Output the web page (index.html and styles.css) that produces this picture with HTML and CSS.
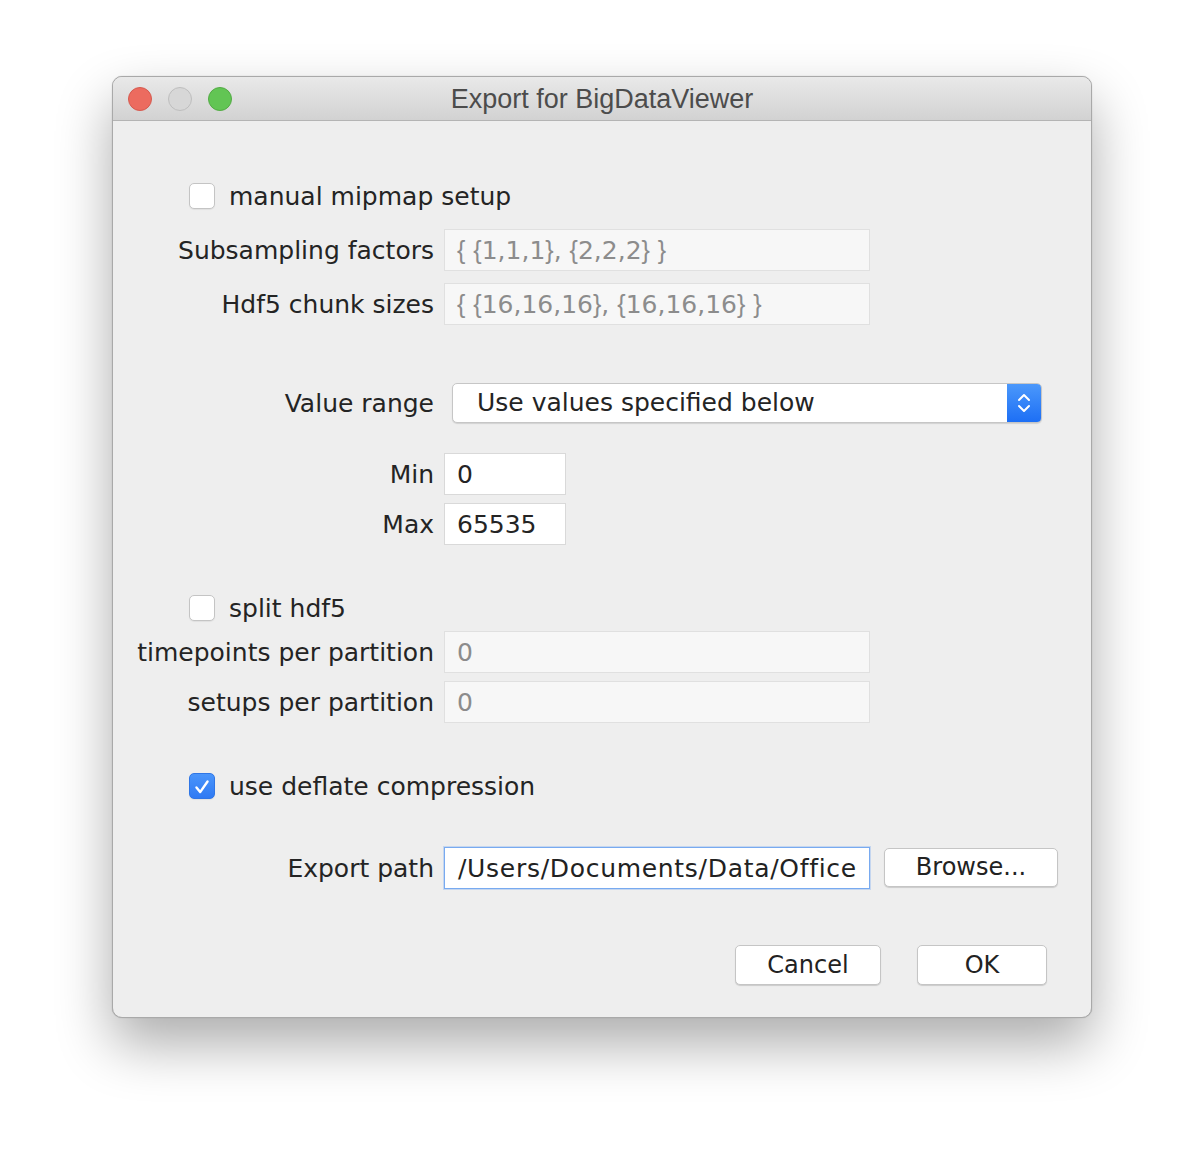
FILE: index.html
```html
<!DOCTYPE html>
<html>
<head>
<meta charset="utf-8">
<link rel="stylesheet" href="styles.css">
</head>
<body>
<div class="window">
  <div class="titlebar">
    <div class="lights">
      <span class="light red"></span>
      <span class="light gray"></span>
      <span class="light green"></span>
    </div>
    <div class="title">Export for BigDataViewer</div>
  </div>
  <div class="content">
    <div class="row check-row r-mipmap">
      <span class="cb"></span><span class="cb-label">manual mipmap setup</span>
    </div>
    <div class="row r-sub">
      <div class="label">Subsampling factors</div>
      <div class="field disabled wide"><span class="val"><span class="p">{</span> <span class="p">{</span>1,1,1<span class="p">}</span>, <span class="p">{</span>2,2,2<span class="p">}</span> <span class="p">}</span></span></div>
    </div>
    <div class="row r-chunk">
      <div class="label">Hdf5 chunk sizes</div>
      <div class="field disabled wide"><span class="val"><span class="p">{</span> <span class="p">{</span>16,16,16<span class="p">}</span>, <span class="p">{</span>16,16,16<span class="p">}</span> <span class="p">}</span></span></div>
    </div>
    <div class="row r-range">
      <div class="label">Value range</div>
      <div class="select">
        <span class="select-text">Use values specified below</span>
        <span class="select-arrows">
          <svg width="16" height="26" viewBox="0 0 16 26"><path d="M3 10 L8 5 L13 10" fill="none" stroke="#fff" stroke-width="2" stroke-linecap="round" stroke-linejoin="round"/><path d="M3 16 L8 21 L13 16" fill="none" stroke="#fff" stroke-width="2" stroke-linecap="round" stroke-linejoin="round"/></svg>
        </span>
      </div>
    </div>
    <div class="row r-min">
      <div class="label">Min</div>
      <div class="field small">0</div>
    </div>
    <div class="row r-max">
      <div class="label">Max</div>
      <div class="field small">65535</div>
    </div>
    <div class="row check-row r-split">
      <span class="cb"></span><span class="cb-label">split hdf5</span>
    </div>
    <div class="row r-tp">
      <div class="label">timepoints per partition</div>
      <div class="field disabled wide">0</div>
    </div>
    <div class="row r-sp">
      <div class="label">setups per partition</div>
      <div class="field disabled wide">0</div>
    </div>
    <div class="row check-row r-deflate">
      <span class="cb checked"><svg width="26" height="26" viewBox="0 0 26 26"><path d="M7 13.5 L11 18.5 L19 7" fill="none" stroke="#fff" stroke-width="2.6" stroke-linecap="round" stroke-linejoin="round"/></svg></span><span class="cb-label">use deflate compression</span>
    </div>
    <div class="row r-export">
      <div class="label">Export path</div>
      <div class="field wide focus">/Users/Documents/Data/Office</div>
      <div class="btn browse">Browse...</div>
    </div>
    <div class="row r-buttons">
      <div class="btn cancel">Cancel</div>
      <div class="btn ok">OK</div>
    </div>
  </div>
</div>
</body>
</html>
```
FILE: styles.css
```css
html, body {
  margin: 0;
  padding: 0;
  background: #ffffff;
}
body {
  width: 1204px;
  height: 1166px;
  overflow: hidden;
  font-family: "DejaVu Sans", "Verdana", sans-serif;
}
.window {
  margin-left: 112px;
  margin-top: 76px;
  width: 980px;
  height: 942px;
  box-sizing: border-box;
  border: 1px solid #a9a9a9;
  border-radius: 10px;
  background: #eeeeee;
  box-shadow: 0 26px 55px rgba(0,0,0,0.33), 0 0 1px rgba(0,0,0,0.3);
  overflow: hidden;
  display: flex;
  flex-direction: column;
}
.titlebar {
  height: 43px;
  flex: none;
  background: linear-gradient(#e9e9e9, #d2d2d2);
  border-bottom: 1px solid #b4b4b4;
  display: flex;
  align-items: center;
  position: relative;
}
.lights {
  display: flex;
  gap: 16px;
  padding-left: 15px;
}
.light {
  width: 22px;
  height: 22px;
  border-radius: 50%;
  border: 1px solid transparent;
}
.light.red { background: #ec6b5f; border-color: #d55a4f; }
.light.gray { background: #d7d7d7; border-color: #bebebe; }
.light.green { background: #62c554; border-color: #53ab45; }
.title {
  position: absolute;
  left: 0;
  right: 0;
  top: 0;
  bottom: 0;
  display: flex;
  align-items: center;
  justify-content: center;
  font-family: "Liberation Sans", "Arial", sans-serif;
  font-size: 27px;
  color: #4c4c4c;
  padding-top: 2px;
}
.content {
  display: flex;
  flex-direction: column;
  font-size: 25px;
  color: #242424;
}
.row {
  display: flex;
  align-items: center;
}
.label {
  width: 321px;
  text-align: right;
  flex: none;
  margin-right: 10px;
  white-space: nowrap;
}
.check-row {
  padding-left: 76px;
  height: 26px;
}
.cb {
  width: 26px;
  height: 26px;
  box-sizing: border-box;
  border: 1px solid #c4c4c4;
  border-radius: 5px;
  background: #ffffff;
  box-shadow: 0 1px 1px rgba(0,0,0,0.06);
  flex: none;
  display: flex;
}
.cb.checked {
  background: linear-gradient(#4a95fb, #2f7af3);
  border-color: #2f76e6;
}
.cb-label {
  margin-left: 14px;
}
.field {
  height: 42px;
  box-sizing: border-box;
  border: 1px solid #d9d9d9;
  background: #ffffff;
  padding-left: 12px;
  display: flex;
  align-items: center;
  white-space: pre;
  overflow: hidden;
  flex: none;
}
.val {
  white-space: pre;
}
.p {
  font-family: "Liberation Sans", "Arial", sans-serif;
}
.field.wide { width: 426px; }
.field.small { width: 122px; }
.field.disabled {
  background: #f7f7f7;
  border-color: #e0e0e0;
  color: #8c8c8c;
}
.field.focus {
  border: 1px solid #78aaf0;
  box-shadow: 0 0 0 1px rgba(120,170,240,0.35);
  color: #222;
  padding-left: 13px;
  letter-spacing: 0.7px;
}
.select {
  margin-left: 8px;
  width: 590px;
  height: 40px;
  box-sizing: border-box;
  border: 1px solid #c6c6c6;
  border-radius: 5px;
  background: #fff;
  box-shadow: 0 1px 1px rgba(0,0,0,0.12);
  display: flex;
  align-items: center;
  overflow: hidden;
}
.select-text {
  flex: 1;
  padding-left: 24px;
  margin-top: -2px;
}
.select-arrows {
  width: 34px;
  height: 100%;
  background: linear-gradient(#4b98fb, #1d6ff5);
  display: flex;
  align-items: center;
  justify-content: center;
  flex: none;
}
.btn {
  box-sizing: border-box;
  height: 40px;
  border: 1px solid #c5c5c5;
  border-radius: 5px;
  background: #ffffff;
  box-shadow: 0 1px 1px rgba(0,0,0,0.15);
  display: flex;
  align-items: center;
  justify-content: center;
  color: #222;
  flex: none;
  font-size: 24px;
}
.browse {
  width: 174px;
  margin-left: 14px;
  margin-bottom: 2px;
  height: 39px;
}
.r-buttons {
  justify-content: flex-end;
  padding-right: 44px;
}
.cancel { width: 146px; }
.ok { width: 130px; margin-left: 36px; }

.r-mipmap { margin-top: 62px; }
.r-sub { margin-top: 20px; }
.r-chunk { margin-top: 12px; }
.r-range { margin-top: 58px; }
.r-min { margin-top: 30px; }
.r-max { margin-top: 8px; }
.r-split { margin-top: 50px; }
.r-tp { margin-top: 10px; }
.r-sp { margin-top: 8px; }
.r-deflate { margin-top: 50px; }
.r-export { margin-top: 48px; align-items: center; }
.r-buttons { margin-top: 56px; }
```
